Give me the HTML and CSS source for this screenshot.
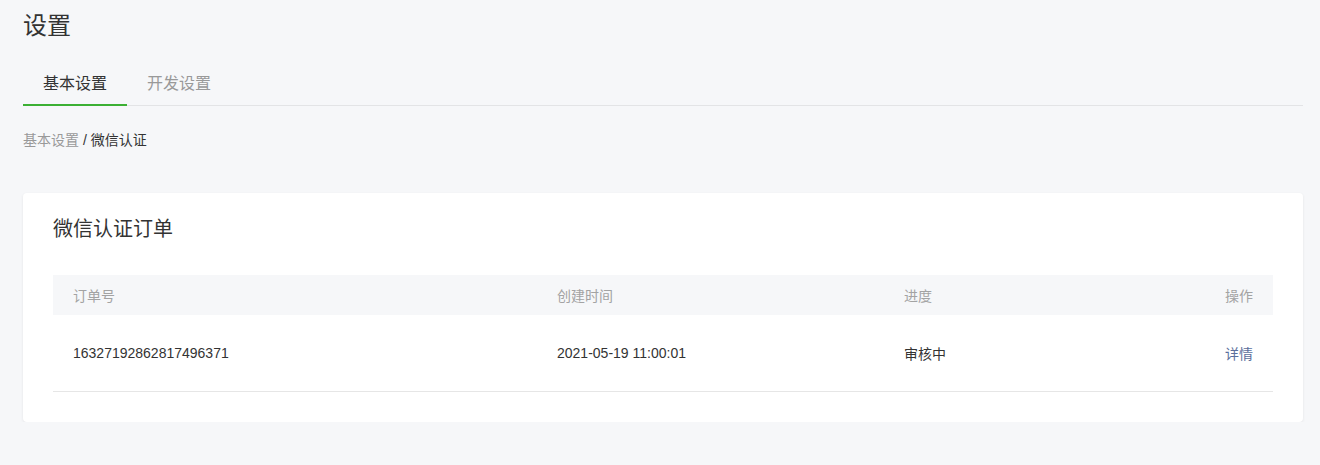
FILE: index.html
```html
<!DOCTYPE html>
<html lang="zh-CN">
<head>
<meta charset="utf-8">
<title>设置</title>
<link rel="stylesheet" href="styles.css">
</head>
<body>
<div class="page">
  <h1 class="page-title">设置</h1>
  <div class="tabs">
    <div class="tab active">基本设置</div>
    <div class="tab">开发设置</div>
  </div>
  <div class="breadcrumb"><span class="crumb-link">基本设置</span> / 微信认证</div>
  <div class="card">
    <div class="card-title">微信认证订单</div>
    <table class="table">
      <thead>
        <tr>
          <th class="c1">订单号</th>
          <th class="c2">创建时间</th>
          <th class="c3">进度</th>
          <th class="c4">操作</th>
        </tr>
      </thead>
      <tbody>
        <tr>
          <td class="c1">16327192862817496371</td>
          <td class="c2">2021-05-19 11:00:01</td>
          <td class="c3">审核中</td>
          <td class="c4"><a class="link">详情</a></td>
        </tr>
      </tbody>
    </table>
  </div>
</div>
</body>
</html>
```
FILE: styles.css
```css
* { box-sizing: border-box; }
html, body { margin: 0; padding: 0; }
body {
  background: #f6f7f9;
  font-family: "Helvetica Neue", "Liberation Sans", "Noto Sans CJK SC", sans-serif;
  color: #333;
}
.page { padding: 0 17px 0 23px; }
.page-title {
  margin: 0;
  padding-top: 9px;
  font-size: 24px;
  line-height: 34px;
  font-weight: 400;
  color: #333;
}
.tabs {
  display: flex;
  margin-top: 21px;
  border-bottom: 1px solid #e3e4e6;
}
.tab {
  padding: 9px 20px 9px;
  font-size: 16px;
  line-height: 22px;
  color: #999;
  margin-bottom: -1px;
  border-bottom: 2px solid transparent;
}
.tab.active {
  color: #333;
  border-bottom-color: #3cb034;
}
.breadcrumb {
  margin-top: 24px;
  font-size: 14px;
  line-height: 20px;
  color: #333;
}
.crumb-link { color: #999; }
.card {
  margin-top: 43px;
  background: #fff;
  border-radius: 4px;
  box-shadow: 0 1px 3px rgba(0,0,0,0.08);
  padding: 20px 30px 30px;
}
.card-title {
  font-size: 20px;
  line-height: 32px;
  color: #333;
}
.table {
  width: 100%;
  margin-top: 30px;
  border-collapse: collapse;
  table-layout: fixed;
  font-size: 14px;
}
.table th {
  background: #f6f7f9;
  color: #a3a3a3;
  font-weight: 400;
  text-align: left;
  height: 40px;
  padding: 0 20px;
}
.table td {
  height: 76px;
  padding: 0 20px;
  color: #333;
  border-bottom: 1px solid #e6e6e6;
}
.c1 { width: 484px; }
.c2 { width: 347px; }
.c4 { width: 200px; }
.table th.c4, .table td.c4 { text-align: right; }
.link { color: #5b6f9c; cursor: pointer; }
```
